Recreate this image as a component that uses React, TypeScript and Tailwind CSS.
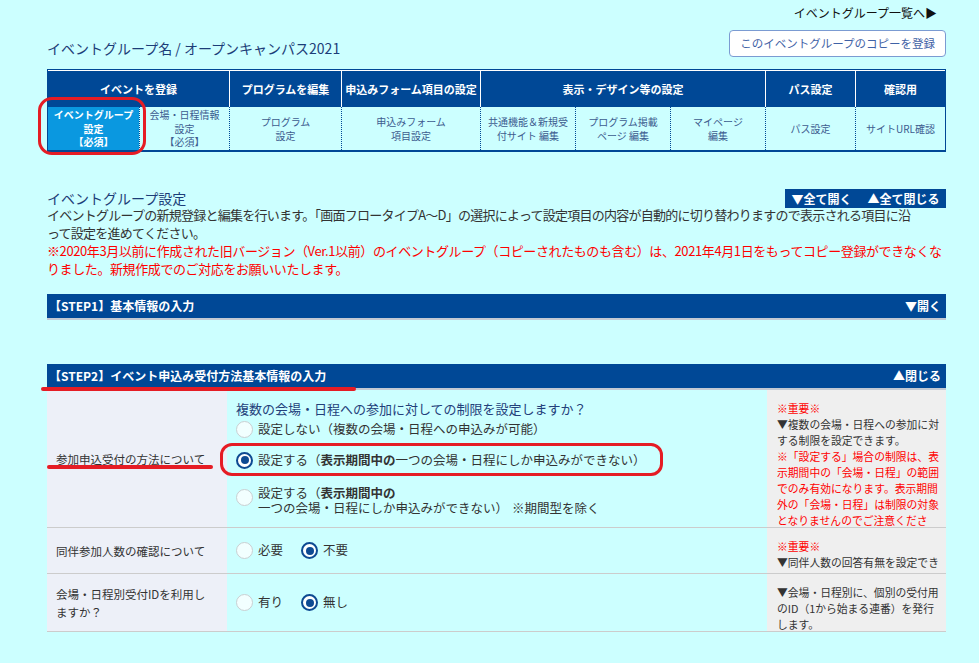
import React from "react";

function Radio({ checked }: { checked?: boolean }) {
  return checked ? (
    <span className="inline-flex h-[17px] w-[17px] shrink-0 items-center justify-center rounded-full border-2 border-[#0d4a92] bg-white">
      <span className="h-[8px] w-[8px] rounded-full bg-[#0d4a92]" />
    </span>
  ) : (
    <span className="inline-block h-[17px] w-[17px] shrink-0 rounded-full border border-[#c9cfd2] bg-[#f2ffff]" />
  );
}

function StepBar({ title, action }: { title: string; action: string }) {
  return (
    <div className="flex h-[26px] items-center justify-between border-b-2 border-[#c3c9d3] bg-[#004896] pl-[2px] pr-[5px] text-[12px] font-bold text-white">
      <span>{title}</span>
      <span>{action}</span>
    </div>
  );
}

export default function App() {
  const header = [
    { t: "イベントを登録", span: "col-span-2" },
    { t: "プログラムを編集", span: "" },
    { t: "申込みフォーム項目の設定", span: "" },
    { t: "表示・デザイン等の設定", span: "col-span-3" },
    { t: "パス設定", span: "" },
    { t: "確認用", span: "" },
  ];
  const subs: string[][] = [
    ["会場・日程情報", "設定", "【必須】"],
    ["プログラム", "設定"],
    ["申込みフォーム", "項目設定"],
    ["共通機能＆新規受", "付サイト 編集"],
    ["プログラム掲載", "ページ 編集"],
    ["マイページ", "編集"],
    ["パス設定"],
    ["サイトURL確認"],
  ];

  return (
    <div className="min-h-[663px] bg-[#ccffff] font-['Noto_Sans_CJK_JP',sans-serif] text-[#333]">
      <div className="pl-[47px] pr-[33px] pt-[5px]">
        {/* top link */}
        <div className="flex justify-end pr-[9px] text-[12px] leading-[16px] text-[#111]">
          イベントグループ一覧へ▶
        </div>

        {/* title row */}
        <div className="mt-[9px] flex h-[27px] items-start justify-between">
          <div className="mt-[9px] text-[14px] leading-[18px] text-[#1c3d78]">
            イベントグループ名 / オープンキャンパス2021
          </div>
          <div className="flex h-[27px] items-center rounded-[4px] border border-[#7b9bd2] bg-white px-[10px] text-[11.5px] text-[#3f62a6]">
            このイベントグループのコピーを登録
          </div>
        </div>

        {/* nav table */}
        <div className="mt-[12px] border border-b-2 border-[#004896]">
          <div className="grid grid-cols-[91px_90px_112px_139px_95px_95px_95px_90px_1fr]">
            {header.map((h, i) => (
              <div
                key={h.t}
                className={`${h.span} flex h-[37px] items-center justify-center border-t border-white bg-[#004896] text-[11px] font-bold text-white ${i > 0 ? "border-l" : ""}`}
              >
                {h.t}
              </div>
            ))}
            <div className="relative flex h-[43px] flex-col items-center justify-center bg-[#0a98e0] text-center text-[10px] font-bold leading-[13.5px] text-white">
              <span>イベントグループ</span>
              <span>設定</span>
              <span>【必須】</span>
              <span className="pointer-events-none absolute -left-[10px] -top-[10px] h-[58px] w-[108px] rounded-[14px] border-[3.5px] border-[#e51c24]" />
            </div>
            {subs.map((lines, i) => (
              <div
                key={i}
                className="flex h-[43px] flex-col items-center justify-center border-l border-dotted border-[#004896] text-center text-[10px] leading-[13.5px] text-[#3d5c8f]"
              >
                {lines.map((l) => (
                  <span key={l}>{l}</span>
                ))}
              </div>
            ))}
          </div>
        </div>

        {/* section heading */}
        <div className="mt-[37px] flex h-[17px] items-start justify-between">
          <div className="pt-[1px] text-[14px] leading-[17px] text-[#1c3d78]">イベントグループ設定</div>
          <div className="flex h-[19px] w-[161px] shrink-0 items-center justify-center gap-[16px] bg-[#004896] text-[12px] font-bold leading-none text-white">
            <span>▼全て開く</span>
            <span>▲全て閉じる</span>
          </div>
        </div>

        <div className="whitespace-nowrap text-[13px] leading-[18px] tracking-[-0.4px]">
          <div className="tracking-[-0.75px]">
            イベントグループの新規登録と編集を行います。「画面フロータイプA～D」の選択によって設定項目の内容が自動的に切り替わりますので表示される項目に沿
          </div>
          <div className="tracking-[-0.75px]">って設定を進めてください。</div>
          <div className="text-[#ff0000]">
            ※2020年3月以前に作成された旧バージョン（Ver.1以前）のイベントグループ（コピーされたものも含む）は、2021年4月1日をもってコピー登録ができなくな
          </div>
          <div className="text-[#ff0000]">りました。新規作成でのご対応をお願いいたします。</div>
        </div>

        <div className="mt-[16px]">
          <StepBar title="【STEP1】基本情報の入力" action="▼開く" />
        </div>

        <div className="relative mt-[44px]">
          <StepBar title="【STEP2】イベント申込み受付方法基本情報の入力" action="▲閉じる" />
          <span className="absolute left-[-6px] top-[23px] h-[4px] w-[315px] rounded-full bg-[#e51c24]" />
        </div>

        {/* form table */}
        <div className="grid grid-cols-[180px_540px_1fr]">
          {/* row 1 */}
          <div className="flex h-[138px] items-center border-b border-[#cccccc] bg-[#edf0f8] pl-[9px] text-[11.5px] leading-[18px]">
            <span className="relative">
              参加申込受付の方法について
              <span className="absolute left-[-9px] top-[15px] h-[4px] w-[166px] rounded-full bg-[#e51c24]" />
            </span>
          </div>
          <div className="h-[138px] border-b border-[#cccccc] pl-[9px] pt-[10px]">
            <div className="text-[13px] leading-[18px] text-[#23407a]">
              複数の会場・日程への参加に対しての制限を設定しますか？
            </div>
            <div className="mt-[2px] flex h-[18px] items-center gap-[5px] text-[12.5px] leading-[18px]">
              <Radio />
              <span>設定しない（複数の会場・日程への申込みが可能）</span>
            </div>
            <div className="relative mt-[13px] flex h-[18px] items-center gap-[5px] text-[12.5px] leading-[18px]">
              <Radio checked />
              <span>
                設定する（<b>表示期間中の</b>一つの会場・日程にしか申込みができない）
              </span>
              <span className="pointer-events-none absolute left-[-16px] top-[-8px] h-[33px] w-[443px] rounded-[12px] border-[3.5px] border-[#e51c24]" />
            </div>
            <div className="mt-[16px] flex items-start gap-[5px] text-[12.5px] leading-[15px]">
              <span className="mt-[4px] flex">
                <Radio />
              </span>
              <div>
                <div>
                  設定する（<b>表示期間中の</b>
                </div>
                <div>
                  一つの会場・日程にしか申込みができない）<span className="ml-[4px]">※期間型を除く</span>
                </div>
              </div>
            </div>
          </div>
          <div className="h-[138px] overflow-hidden border-b border-[#cccccc] bg-[#efefef] pl-[10px] pt-[10px] text-[10.8px] leading-[16px]">
            <div className="whitespace-nowrap text-[#ff0000]">※重要※</div>
            <div className="whitespace-nowrap">▼複数の会場・日程への参加に対</div>
            <div className="whitespace-nowrap">する制限を設定できます。</div>
            <div className="whitespace-nowrap text-[#ff0000]">※「設定する」場合の制限は、表</div>
            <div className="whitespace-nowrap text-[#ff0000]">示期間中の「会場・日程」の範囲</div>
            <div className="whitespace-nowrap text-[#ff0000]">でのみ有効になります。表示期間</div>
            <div className="whitespace-nowrap text-[#ff0000]">外の「会場・日程」は制限の対象</div>
            <div className="whitespace-nowrap text-[#ff0000]">となりませんのでご注意くださ</div>
            <div className="whitespace-nowrap text-[#ff0000]">い。</div>
          </div>

          {/* row 2 */}
          <div className="flex h-[46px] items-center border-b border-[#cccccc] bg-[#edf0f8] pl-[9px] text-[11.5px] leading-[18px]">
            同伴参加人数の確認について
          </div>
          <div className="flex h-[46px] items-center border-b border-[#cccccc] pl-[9px] text-[12.5px]">
            <Radio />
            <span className="ml-[5px]">必要</span>
            <span className="ml-[18px] flex">
              <Radio checked />
            </span>
            <span className="ml-[5px]">不要</span>
          </div>
          <div className="h-[46px] overflow-hidden border-b border-[#cccccc] bg-[#efefef] pl-[10px] pt-[10px] text-[10.8px] leading-[16px]">
            <div className="whitespace-nowrap text-[#ff0000]">※重要※</div>
            <div className="whitespace-nowrap">▼同伴人数の回答有無を設定でき</div>
            <div className="whitespace-nowrap">ます。</div>
          </div>

          {/* row 3 */}
          <div className="flex h-[58px] items-center border-b border-[#cccccc] bg-[#edf0f8] pl-[9px] text-[11.5px] leading-[18px]">
            <span>
              会場・日程別受付IDを利用し
              <br />
              ますか？
            </span>
          </div>
          <div className="flex h-[58px] items-center border-b border-[#cccccc] pl-[9px] text-[12.5px]">
            <Radio />
            <span className="ml-[5px]">有り</span>
            <span className="ml-[18px] flex">
              <Radio checked />
            </span>
            <span className="ml-[5px]">無し</span>
          </div>
          <div className="h-[58px] overflow-hidden border-b border-[#cccccc] bg-[#efefef] pl-[10px] pt-[10px] text-[10.8px] leading-[16px]">
            <div className="whitespace-nowrap">▼会場・日程別に、個別の受付用</div>
            <div className="whitespace-nowrap">のID（1から始まる連番）を発行</div>
            <div className="whitespace-nowrap">します。</div>
          </div>
        </div>
      </div>
    </div>
  );
}
